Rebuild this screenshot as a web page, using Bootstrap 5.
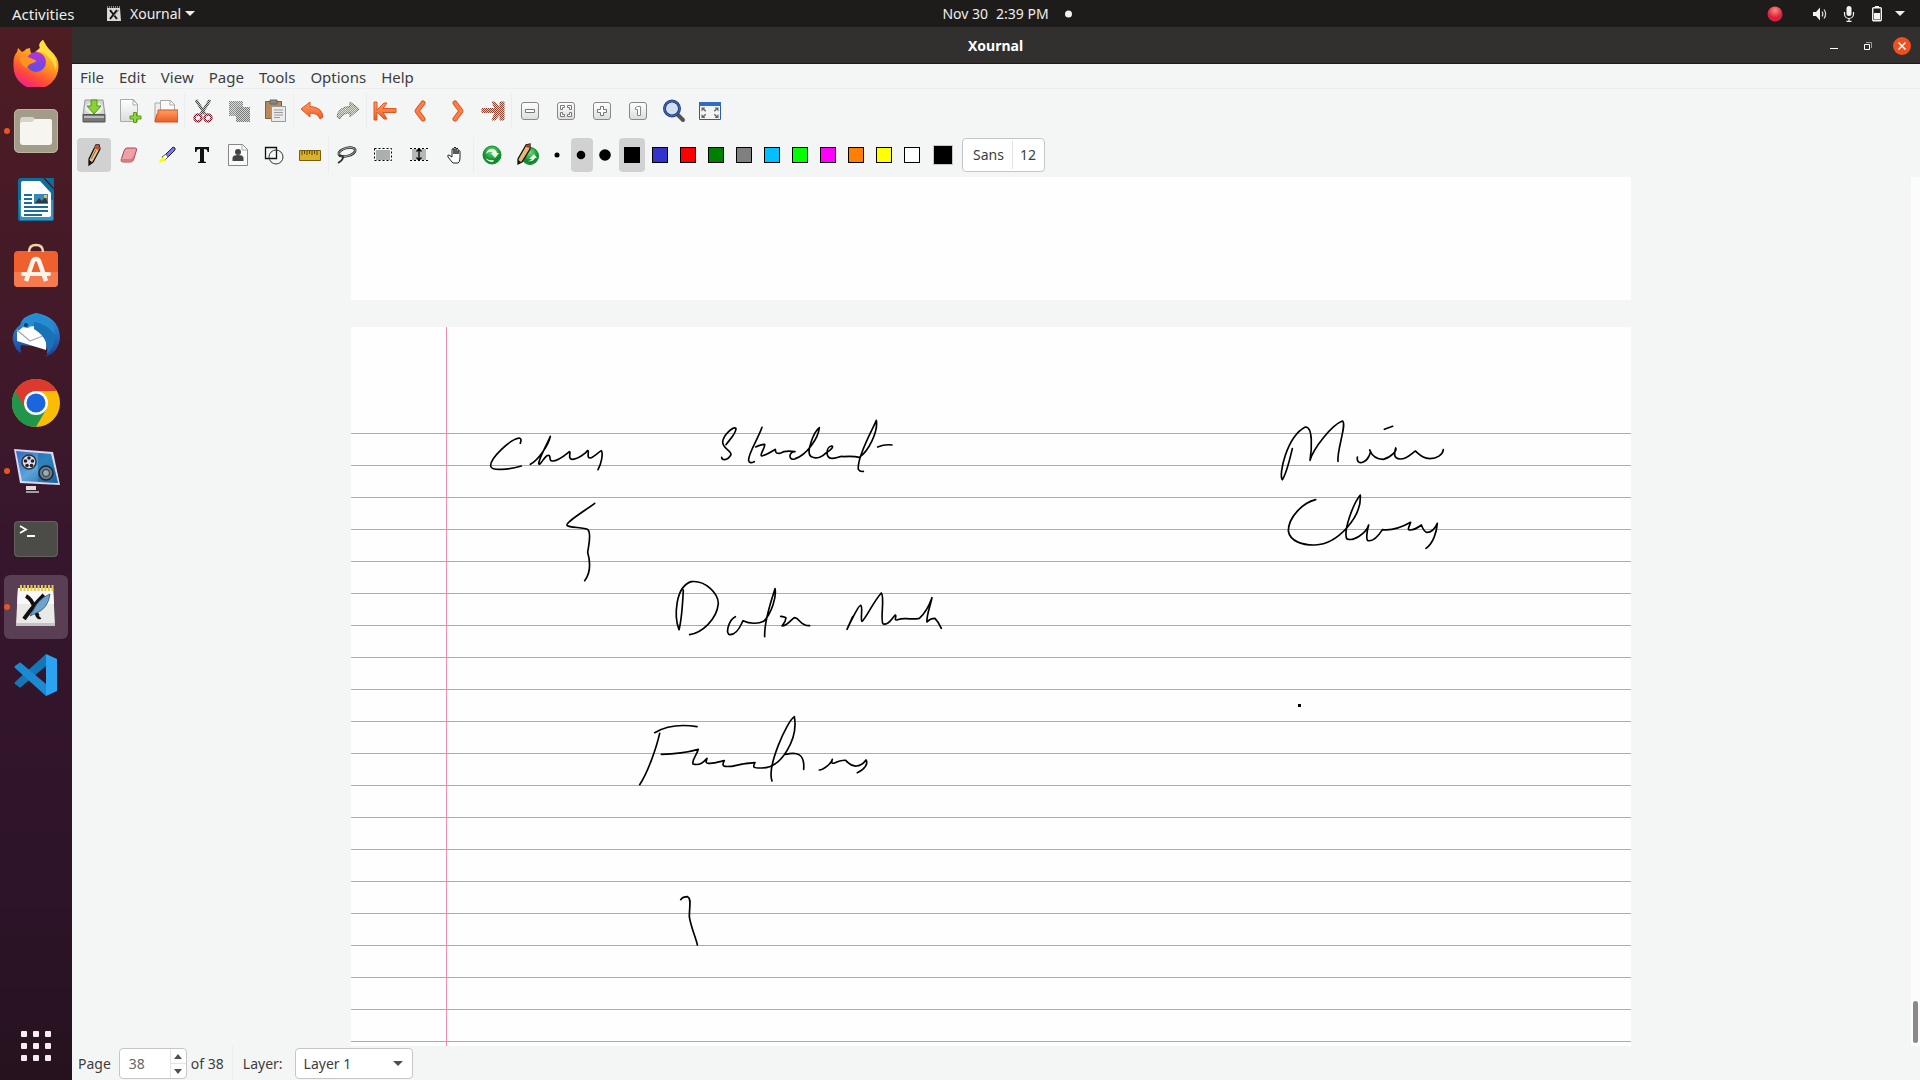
<!DOCTYPE html>
<html lang="en">
<head>
<meta charset="utf-8">
<meta name="viewport" content="width=device-width, initial-scale=1">
<title>Xournal</title>
<link href="https://cdn.jsdelivr.net/npm/bootstrap@5.3.0/dist/css/bootstrap.min.css" rel="stylesheet">
<style>
  body { font: 14px/20px "Noto Sans", "Open Sans", sans-serif; color: #3d3d3d; background: #f4f6f6; }
  button { font: inherit; color: inherit; background: none; border: 0; padding: 0; }
  svg { display: block; flex: none; }
  .top-panel { height: 27px; background: #1d1c1a; color: #eeeeec; }
  .panel-left { flex: 1 1 86px; }
  .panel-right { flex: 1 1 0; padding-right: 15px; }
  .tray-icon { margin-left: 12px; }
  .activities { font-size: 15px; width: 62px; }
  .clock-dot { width: 7px; height: 7px; background: #f2f2f2; }
  .dock { width: 72px; padding: 4px 4px 2px; background: linear-gradient(#4e1c22 0, #431a28 25%, #36162d 50%, #2e1429 80%, #26121f 100%); }
  .dock-item { height: 64px; border-radius: 6px; }
  .dock-item.active { background: #5a3f54; }
  .dock-item.running::before { content: ""; position: absolute; left: 0; top: 29px; width: 6px; height: 6px; border-radius: 50%; background: #e95420; }
  .title-bar { height: 37px; background: #32302f; border-bottom: 1px solid #1b1a19; color: #fff; padding: 1px 9px 0 0; }
  .title-side { flex: 1 1 0; gap: 16px; }
  .win-btn { width: 18px; height: 18px; }
  .menu-bar { height: 25px; border-bottom: 1px solid #eceeee; }
  .menu-bar .nav-link { padding: 0 7px 0 8px; font-size: 15px; line-height: 26px; color: #3d3d3d; }
  .tool-row { height: 44px; padding: 0 4px; }
  .tool { width: 34px; height: 34px; margin: 0 1px; border-radius: 4px; display: flex; align-items: center; justify-content: center; flex: none; }
  .tool[aria-pressed="true"] { background: #d1d1d1; }
  .tool.dot { width: 22px; }
  .tool.swatch { width: 26px; }
  .tool.picker { width: 32px; }
  .ink { width: 16px; height: 16px; border: 1px solid #000; }
  .ink-lg { width: 18px; height: 18px; background: #000; outline: 1px solid #c4c8c8; }
  .rule { width: 1px; height: 36px; background: #eceeee; flex: none; }
  .font-btn { height: 34px; padding: 0 8px 0 10px; border: 1px solid #c6c6c6; border-radius: 4px; background: #fff; margin-left: 2px; }
  .font-btn .size-part { border-left: 1px solid #e4e4e4; padding-left: 7px; margin-left: 8px; line-height: 28px; }
  .desk { min-height: 0; }
  .sheets { gap: 27px; min-width: 0; padding-right: 1px; }
  .sheet { width: 1280px; max-width: 100%; background: #fefefe; }
  .sheet-prev { height: 123px; flex: none; }
  .sheet-ruled { background:
      linear-gradient(90deg, transparent 95px, #f08cae 95px, #f08cae 96px, transparent 96px),
      repeating-linear-gradient(transparent 0 31px, #82b6dc 31px 32px) 0 75px / 100% 100% no-repeat, #fefefe; }
  .scroll-track { width: 9px; padding-bottom: 3px; background: #fcfcfc; }
  .scroll-thumb { width: 5px; height: 42px; border-radius: 3px; background: #8a8888; }
  .status-bar { height: 34px; padding: 1px 6px 0; }
  .spin { width: 68px; height: 31px; border: 1px solid #c6c6c6; border-radius: 4px; background: #fff; }
  .spin input { width: 50px; border: 0; background: none; padding: 0 0 0 9px; color: #666; appearance: textfield; -moz-appearance: textfield; }
  .spin input::-webkit-inner-spin-button { appearance: none; -webkit-appearance: none; margin: 0; }
  .spin-arrows { width: 16px; border-left: 1px solid #e4e4e4; }
  .spin-arrows button + button { border-top: 1px solid #e4e4e4; }
  .layer-label { margin: 0 12px 0 10px; }
  .layer-select { width: 118px; height: 31px; padding: 0 30px 0 8px; font-size: 14px; line-height: 20px; color: #3d3d3d; border: 1px solid #c6c6c6; border-radius: 4px;
      background: #fff url("data:image/svg+xml,%3Csvg xmlns='http://www.w3.org/2000/svg' viewBox='0 0 10 5'%3E%3Cpath d='M0 0h10L5 5z' fill='%23505050'/%3E%3C/svg%3E") right 9px center / 10px 5px no-repeat; }
</style>
</head>
<body class="vh-100 d-flex flex-column overflow-hidden">

<svg class="position-absolute" width="0" height="0" aria-hidden="true">
  <defs>
    <pattern id="checks" width="2" height="2" patternUnits="userSpaceOnUse"><path fill="#fff" d="M0 0h1v1H0zM1 1h1v1H1z"/><path fill="#444" d="M1 0h1v1H1zM0 1h1v1H0z"/></pattern>
    <mask id="dither" maskUnits="userSpaceOnUse" x="0" y="0" width="24" height="24"><rect width="24" height="24" fill="url(#checks)"/></mask>
    <linearGradient id="orange" x2="0" y2="1"><stop stop-color="#fca066"/><stop offset="1" stop-color="#ee5a24"/></linearGradient>
    <linearGradient id="tile" x2="0" y2="1"><stop stop-color="#fff"/><stop offset="1" stop-color="#dcdcdc"/></linearGradient>
    <linearGradient id="foxbody" x1=".8" y1="0" x2=".3" y2="1"><stop stop-color="#ffe84a"/><stop offset=".45" stop-color="#ff9a1e"/><stop offset=".75" stop-color="#ff4a3a"/><stop offset="1" stop-color="#f01e8c"/></linearGradient>
    <linearGradient id="foxeye" x2="0" y2="1"><stop stop-color="#b833d8"/><stop offset="1" stop-color="#5b50e0"/></linearGradient>
    <linearGradient id="bird" x2="0" y2="1"><stop stop-color="#2a9de0"/><stop offset="1" stop-color="#1f3f9c"/></linearGradient>
    <linearGradient id="monitor" x2="1" y2="1"><stop stop-color="#3468c4"/><stop offset=".5" stop-color="#5ba4dc"/><stop offset="1" stop-color="#245a9a"/></linearGradient>
    <radialGradient id="rec" cy=".25"><stop stop-color="#ff8a7a"/><stop offset="1" stop-color="#dc1f3c"/></radialGradient>
    <radialGradient id="green" cy=".3"><stop stop-color="#6fdc7c"/><stop offset="1" stop-color="#0f8a2c"/></radialGradient>
  </defs>
</svg>

<header class="top-panel d-flex align-items-center flex-shrink-0">
  <div class="panel-left d-flex align-items-center ps-2">
    <button class="activities ms-1 text-start">Activities</button>
    <button class="d-flex align-items-center ms-4 ps-2 gap-1">
      <svg class="me-1" width="16" height="16" viewBox="0 0 16 16"><path d="M1 2h13l1 13H1z" fill="#d8d8d6"/><path d="M1 1h13" stroke="#eee" stroke-dasharray="1 1"/><path d="M4 4l7 9M11 4l-7 9" stroke="#111" stroke-width="2"/><path d="M13 4l-6 7" stroke="#889" stroke-width="1"/></svg>
      <span>Xournal</span>
      <svg width="10" height="6" viewBox="0 0 10 6"><path d="M0 0h10L5 5z" fill="#eee"/></svg>
    </button>
  </div>
  <button class="d-flex align-items-center position-relative" aria-label="Clock">
    <span>Nov 30</span><span class="ms-2">2:39 PM</span>
    <span class="clock-dot rounded-circle position-absolute start-100 top-50 translate-middle-y ms-3"></span>
  </button>
  <div class="panel-right d-flex align-items-center justify-content-end">
    <svg width="16" height="16" viewBox="0 0 16 16"><circle cx="8" cy="8" r="7.500" fill="url(#rec)"/></svg>
    <svg class="ms-4 me-2" width="24" height="16" viewBox="0 0 24 16"><path d="M6 6h3l4-4.500v13L9 10H6z" fill="#f2f2f2"/><path d="M15 5.500q1.700 2.500 0 5M17 3.500q3.200 4.500 0 9" fill="none" stroke="#ddd" stroke-width="1.200"/></svg>
    <svg class="ms-1" width="12" height="16" viewBox="0 0 12 16"><rect x="3.500" y="0" width="5" height="10" rx="2.500" fill="#f2f2f2"/><path d="M1.500 6v2a4.500 4.500 0 0 0 9 0V6M6 12v3M3.500 15.300h5" fill="none" stroke="#f2f2f2" stroke-width="1.200"/></svg>
    <svg class="ms-3" width="12" height="16" viewBox="0 0 12 16"><path d="M4 0h4v2H4z" fill="#f2f2f2"/><rect x="1.700" y="1.700" width="8.600" height="13" rx="1" fill="none" stroke="#f2f2f2" stroke-width="1.400"/><path d="M3 7h6v6.500H3z" fill="#f2f2f2"/></svg>
    <svg class="tray-icon" width="10" height="6" viewBox="0 0 10 6"><path d="M0 0h10L5 5z" fill="#eee"/></svg>
  </div>
</header>

<div class="desk d-flex flex-grow-1">
  <nav class="dock d-flex flex-column gap-1 flex-shrink-0" aria-label="Dock">
    <button class="dock-item d-flex align-items-center justify-content-center" aria-label="Firefox">
      <svg width="48" height="48" viewBox="0 0 48 48"><path d="M28 9Q26 4 31 1q3 7 8 11 8 7 7.500 16A22.500 22.500 0 0 1 1.500 27Q1 17 5 13l1-4 4 4q3-1 4-3l4-1q0 6 5 8z" fill="url(#foxbody)"/><circle cx="24" cy="23" r="10" fill="url(#foxeye)"/><path d="M28 9Q26 4 31 1q4 8 9 13 6 7 4 17-4-12-12-17-4-2-9-1z" fill="#ffdf3d"/><path d="M7 19q4-3 9-1l7 3q3 1-2 3-5 1-6 5-5-1-8-10z" fill="#ff9320"/></svg>
    </button>
    <button class="dock-item running position-relative d-flex align-items-center justify-content-center" aria-label="Files">
      <svg width="48" height="48" viewBox="0 0 48 48"><rect x="2" y="2" width="44" height="44" rx="5" fill="#a39c88"/><rect x="2.500" y="2.500" width="43" height="43" rx="5" fill="none" stroke="#bbb4a2"/><path d="M8 14q0-4 3-4h9q2 0 3 2l1 2h13v8H8z" fill="#d8d3c8"/><path d="M8 17q0-2 2-2h10l3-3h15q2 0 2 2v21q0 3-3 3H11q-3 0-3-3z" fill="#f7f5f0"/></svg>
    </button>
    <button class="dock-item d-flex align-items-center justify-content-center" aria-label="LibreOffice Writer">
      <svg width="48" height="48" viewBox="0 0 48 48"><path d="M9 3h22l11 12v29q0 2-2 2H8q-2 0-2-2V6q0-3 3-3z" fill="#0f6d9c"/><path d="M7 25h34v20H8z" fill="#3b93bb"/><path d="M11 6h17l11 12v22q0 2-2 2H11q-2 0-2-2V8q0-2 2-2z" fill="#fff"/><path d="M33 3h9v10z" fill="#0f6d9c"/><path d="M12 20h8M12 24h8M12 28h8M12 32h24M12 36h24M12 40h18" stroke="#1c6c98" stroke-width="1.800"/><path d="M22 19h14v10H22z" fill="#3a8ab8"/><path d="M23 28l4-5 3 3 3-4 3 6z" fill="#2b3a40"/><path d="M32 20h3v3h-3z" fill="#f4b63c"/></svg>
    </button>
    <button class="dock-item d-flex align-items-center justify-content-center" aria-label="Ubuntu Software">
      <svg width="48" height="48" viewBox="0 0 48 48"><rect x="2" y="8" width="44" height="36" rx="4" fill="#f0602f"/><path d="M2 29h44v11q0 4-4 4H6q-4 0-4-4z" fill="#f47a50"/><path d="M17 9q0-7 7-7t7 7" fill="none" stroke="#f3d0a8" stroke-width="2.500"/><path d="M14 38l7-20q1-2 3-2t3 2l7 20" fill="none" stroke="#fff3ea" stroke-width="4.500"/><path d="M11 31h26" stroke="#fff3ea" stroke-width="4" stroke-linecap="round"/></svg>
    </button>
    <button class="dock-item d-flex align-items-center justify-content-center" aria-label="Thunderbird">
      <svg width="48" height="48" viewBox="0 0 48 48"><path d="M24 2Q10 5 8 14-1 21 1 30q2 9 8 12-1-6 0-8l28 3q0 5-4 9 14-5 15-20Q47 6 24 2z" fill="url(#bird)"/><path d="M5 21l6-5 14-1 10 3-1 21-29-9z" fill="#fff"/><path d="M5 19l13 11 18-7" fill="none" stroke="#aab" stroke-width="1.300"/><path d="M10 13Q15 3 26 3q15 3 17 22Q38 14 23 11l-7 6-6-1z" fill="#248dd2"/><path d="M22 11q12 1 22 14-1 10-9 18 2-16-13-25z" fill="#1971b8"/><circle cx="14" cy="14" r="2" fill="#123a6a"/></svg>
    </button>
    <button class="dock-item d-flex align-items-center justify-content-center" aria-label="Google Chrome">
      <svg width="48" height="48" viewBox="0 0 48 48"><circle cx="24" cy="24" r="24" fill="#fbbc05"/><path d="M3.200 12A24 24 0 0 0 24 48l10.400-18z" fill="#1f9649"/><path d="M24 12h20.800A24 24 0 0 0 3.200 12L13.600 30z" fill="#dc3a2f"/><circle cx="24" cy="24" r="12" fill="#fff"/><circle cx="24" cy="24" r="9.500" fill="#1a66dc"/></svg>
    </button>
    <button class="dock-item running position-relative d-flex align-items-center justify-content-center" aria-label="Screen recorder">
      <svg width="48" height="48" viewBox="0 0 48 48"><path d="M2 2l39 3 7 33-40-2z" fill="#d8d8ee"/><path d="M4 4l35 3 7 29-36-2z" fill="url(#monitor)"/><path d="M26 6l13 1 7 29-20-1z" fill="#0f6ca8" opacity=".6"/><circle cx="17" cy="15" r="7" fill="#dde" stroke="#333" stroke-width="1.500"/><g fill="#222"><circle cx="17" cy="11" r="1.800"/><circle cx="13.500" cy="14" r="1.800"/><circle cx="15" cy="18.500" r="1.800"/><circle cx="19.500" cy="18.500" r="1.800"/><circle cx="20.500" cy="14" r="1.800"/></g><circle cx="34" cy="26" r="7" fill="#667a88" stroke="#223" stroke-width="1.500"/><circle cx="34" cy="26" r="3.500" fill="#9ab" stroke="#333"/><path d="M14 39h10v4H14z" fill="#ddd"/><path d="M14 45h13" stroke="#ccc" stroke-width="1.500"/></svg>
    </button>
    <button class="dock-item d-flex align-items-center justify-content-center" aria-label="Terminal">
      <svg width="48" height="48" viewBox="0 0 48 48"><rect x="2" y="6" width="44" height="36" rx="4" fill="#4b4c48"/><rect x="2.500" y="6.500" width="43" height="35" rx="4" fill="none" stroke="#63645f"/><path d="M8 11l6 3.500L8 18M15 21h8" fill="none" stroke="#fff" stroke-width="1.800"/></svg>
    </button>
    <button class="dock-item active running position-relative d-flex align-items-center justify-content-center" aria-label="Xournal">
      <svg width="48" height="48" viewBox="0 0 48 48"><path d="M6 5h35l2 37H4z" fill="#e9e9e7"/><path d="M6 5h35l1 16H5z" fill="#f8f8f8"/><path d="M4 40h39v3H4z" fill="#c4c4c2"/><path d="M8 5h34" stroke="#e9c93a" stroke-width="6" stroke-dasharray="2 1.500"/><path d="M14 13q6 3 9 13t5 8M32 12Q22 22 12 36" fill="none" stroke="#111" stroke-width="4"/><path d="M38 11Q26 16 21 28l-3 5 6-3q12-4 14-19z" fill="#6fa3cc" stroke="#3a6a94"/></svg>
    </button>
    <button class="dock-item d-flex align-items-center justify-content-center" aria-label="Visual Studio Code">
      <svg width="48" height="48" viewBox="0 0 48 48"><path d="M34 3v12L9 36q-1 1-2 0l-4-3q-1-1 0-2z" fill="#1277b8"/><path d="M34 45V33L9 12q-1-1-2 0l-4 3q-1 1 0 2z" fill="#1b8ad3"/><path d="M34 3l11 5v32l-11 5z" fill="#2aa4f0"/></svg>
    </button>
    <button class="dock-item d-flex align-items-center justify-content-center mt-auto" aria-label="Show Applications">
      <svg width="30" height="30" viewBox="0 0 30 30" fill="#f8ecf4"><rect width="6" height="6" rx="1"/><rect x="12" width="6" height="6" rx="1"/><rect x="24" width="6" height="6" rx="1"/><rect y="12" width="6" height="6" rx="1"/><rect x="12" y="12" width="6" height="6" rx="1"/><rect x="24" y="12" width="6" height="6" rx="1"/><rect y="24" width="6" height="6" rx="1"/><rect x="12" y="24" width="6" height="6" rx="1"/><rect x="24" y="24" width="6" height="6" rx="1"/></svg>
    </button>
  </nav>

  <main class="sheets-pane d-flex flex-column flex-grow-1 overflow-hidden">
    <div class="title-bar d-flex align-items-center flex-shrink-0">
      <div class="title-side ps-2"></div>
      <strong>Xournal</strong>
      <div class="title-side d-flex justify-content-end">
        <button class="win-btn" aria-label="Minimize"><svg width="18" height="18"><path d="M5 11.500h8" stroke="#fff"/></svg></button>
        <button class="win-btn" aria-label="Restore"><svg width="18" height="18"><path d="M5.500 7.500h5v5h-5z" fill="none" stroke="#fff"/><path d="M7 5.500h5.500V11" fill="none" stroke="#999"/></svg></button>
        <button class="win-btn" aria-label="Close"><svg width="18" height="18"><circle cx="9" cy="9" r="9" fill="#f0501f"/><path d="M5.500 5.500l7 7M12.500 5.500l-7 7" stroke="#fff" stroke-width="1.500"/></svg></button>
      </div>
    </div>

    <nav class="menu-bar nav flex-nowrap flex-shrink-0">
      <a class="nav-link" href="#">File</a><a class="nav-link" href="#">Edit</a><a class="nav-link" href="#">View</a><a class="nav-link" href="#">Page</a><a class="nav-link" href="#">Tools</a><a class="nav-link" href="#">Options</a><a class="nav-link" href="#">Help</a>
    </nav>

    <div class="tool-row d-flex align-items-center flex-shrink-0" role="toolbar" aria-label="Main">
      <button class="tool" aria-label="Save"><svg width="24" height="24"><path d="M3 1h18l2 15H1z" fill="#d4d4d4" stroke="#999"/><ellipse cx="12" cy="9" rx="9" ry="6" fill="#eee"/><path d="M1 15.500h22V23H1z" fill="#777" stroke="#555"/><path d="M2 17h20v2H2z" fill="#bbb"/><path d="M9 1h6v6h4l-7 8-7-8h4z" fill="#8ccf3a" stroke="#4e9a06"/></svg></button>
      <button class="tool" aria-label="New"><svg width="24" height="24"><path d="M2.500.5h13l4 5v17h-17z" fill="url(#tile)" stroke="#aaa"/><path d="M15 1l5 5h-5z" fill="#fff" stroke="#aaa"/><path d="M15.500 13.500h3v3.500H23v3h-4.500v3.500h-3V20H12v-3h3.500z" fill="#8fd63f" stroke="#5a9a12"/></svg></button>
      <button class="tool" aria-label="Open"><svg width="24" height="24"><path d="M1 4h7v18H1z" fill="#eee" stroke="#aaa"/><path d="M6.500 1.500h10l4 4V14h-14z" fill="#fafafa" stroke="#aaa"/><path d="M16 1v5h5" fill="none" stroke="#aaa"/><path d="M1 22l2-7h1v-4h20v12H1z" fill="url(#orange)" stroke="#d5501c"/></svg></button>
      <span class="rule"></span>
      <button class="tool" aria-label="Cut"><svg width="24" height="24"><g mask="url(#dither)"><path d="M5 1l9 14M19 1l-9 14" stroke="#444" stroke-width="3"/><g fill="none" stroke="#7c1020" stroke-width="2.500"><circle cx="7" cy="19" r="3.500"/><circle cx="17" cy="19" r="3.500"/></g></g></svg></button>
      <button class="tool" aria-label="Copy"><svg width="24" height="24"><g mask="url(#dither)"><path d="M2 2h14v15H2z" fill="#8a8a8a"/><path d="M9 8h14v15H9z" fill="#777"/></g></svg></button>
      <button class="tool" aria-label="Paste"><svg width="24" height="24"><path d="M2.500 2.500h16v17h-16z" fill="#b98a55" stroke="#85602f"/><path d="M7 1h7v4H7z" fill="#888" stroke="#666"/><path d="M8.500 7.500h14v15h-14z" fill="#ebebeb" stroke="#999"/><path d="M11 11h9M11 13.500h9M11 16h9M11 18.500h6" stroke="#999"/></svg></button>
      <span class="rule"></span>
      <button class="tool" aria-label="Undo"><svg width="24" height="24"><path d="M1 10l9-7v4.500Q22 8 23 18l-3 2q-2-6-10-6v4z" fill="url(#orange)" stroke="#e0561f"/></svg></button>
      <button class="tool" aria-label="Redo"><svg width="24" height="24"><g mask="url(#dither)"><path d="M23 10l-9-7v4.500Q2 8 1 18l3 2q2-6 10-6v4z" fill="#8fa66c" stroke="#4d6626"/></g></svg></button>
      <span class="rule"></span>
      <button class="tool" aria-label="First page"><svg width="24" height="24"><path d="M1 3h3v8l7-7h3l-4 5.500h13v4H10L14 20h-3l-7-7v8H1z" fill="url(#orange)" stroke="#e0561f"/></svg></button>
      <button class="tool" aria-label="Previous page"><svg width="24" height="24"><path d="M14 4l-6 8 6 8" fill="none" stroke="#e0561f" stroke-width="5" stroke-linecap="round" stroke-linejoin="round"/><path d="M14 4l-6 8 6 8" fill="none" stroke="#f8804c" stroke-width="3" stroke-linecap="round"/></svg></button>
      <button class="tool" aria-label="Next page"><svg width="24" height="24"><path d="M10 4l6 8-6 8" fill="none" stroke="#e0561f" stroke-width="5" stroke-linecap="round" stroke-linejoin="round"/><path d="M10 4l6 8-6 8" fill="none" stroke="#f8804c" stroke-width="3" stroke-linecap="round"/></svg></button>
      <button class="tool" aria-label="Last page"><svg width="24" height="24"><g mask="url(#dither)"><path d="M23 3h-4v6l-5-6h-3l3 6.500H1v4h13L11 21h3l5-6v6h4z" fill="#8c4430" stroke="#8c4430"/></g></svg></button>
      <span class="rule"></span>
      <button class="tool" aria-label="Zoom out"><svg width="24" height="24"><rect x="3.500" y="3.500" width="17" height="17" rx="2.500" fill="url(#tile)" stroke="#888"/><path d="M7.500 10.500h9v3h-9z" fill="#fff" stroke="#777"/></svg></button>
      <button class="tool" aria-label="Page width"><svg width="24" height="24"><rect x="3.500" y="3.500" width="17" height="17" rx="2.500" fill="url(#tile)" stroke="#888"/><path d="M10.500 6.500h-4v4h2v-2h2zM13.500 6.500h4v4h-2v-2h-2zM10.500 17.500h-4v-4h2v2h2zM13.500 17.500h4v-4h-2v2h-2z" fill="#fff" stroke="#777"/></svg></button>
      <button class="tool" aria-label="Zoom in"><svg width="24" height="24"><rect x="3.500" y="3.500" width="17" height="17" rx="2.500" fill="url(#tile)" stroke="#888"/><path d="M10.500 7.500h3v3h3v3h-3v3h-3v-3h-3v-3h3z" fill="#fff" stroke="#777"/></svg></button>
      <button class="tool" aria-label="Normal size"><svg width="24" height="24"><rect x="3.500" y="3.500" width="17" height="17" rx="2.500" fill="url(#tile)" stroke="#888"/><path d="M11.500 7.500h3v9h-3v-6h-2v-2z" fill="#fff" stroke="#888"/></svg></button>
      <button class="tool" aria-label="Set zoom"><svg width="24" height="24"><path d="M15 15l6 6" stroke="#555" stroke-width="4" stroke-linecap="round"/><circle cx="10" cy="9.500" r="7.500" fill="#d4e0ee" stroke="#203f82" stroke-width="3"/><circle cx="10" cy="9.500" r="7.500" fill="none" stroke="#4a74b8"/></svg></button>
      <button class="tool" aria-label="Fullscreen"><svg width="24" height="24"><path d="M1.500 3.500h21v17h-21z" fill="#f4f4f6" stroke="#2a5aa8"/><path d="M1 3h22v4H1z" fill="#2f6cc4"/><path d="M3.500 8.500h4l-1.300 1.300 2 2-1 1-2-2L3.500 12.500zM20.500 8.500h-4l1.300 1.300-2 2 1 1 2-2 1.700 1.700zM3.500 19h4l-1.300-1.300 2-2-1-1-2 2L3.500 15zM20.500 19h-4l1.300-1.300-2-2 1-1 2 2 1.700-1.700z" fill="#666"/></svg></button>
    </div>

    <div class="tool-row d-flex align-items-center flex-shrink-0" role="toolbar" aria-label="Drawing">
      <button class="tool" aria-pressed="true" aria-label="Pen"><svg width="24" height="24"><path d="M14 2l3 0 1 4-7 13-4 3 0-6z" fill="#e8c48c" stroke="#111" stroke-width="1.300"/><path d="M14 2l3 0 1 4-2 1-4-2z" fill="#c4512e"/><path d="M7 17l3 2-3 3z" fill="#111"/><path d="M14 7l-5 9" stroke="#8a6a3a"/></svg></button>
      <button class="tool" aria-label="Eraser"><svg width="24" height="24"><path d="M9 5h8q2 0 1.500 2l-3 10q-1 2-3 2H5q-2 0-2-2l3-9q1-3 3-3z" fill="#eda0a6" stroke="#a04a50"/><path d="M3 15q1 1 2 1h7q2 0 3-2l3-7-3 10q-1 2-3 2H5q-2 0-2-2z" fill="#d97a82"/></svg></button>
      <button class="tool" aria-label="Highlighter"><svg width="24" height="24"><path d="M12 11l7-7 2 1v2l-8 8z" fill="#7a7af0" stroke="#223"/><path d="M8 14l4-3 2 3-4 4z" fill="#fff" stroke="#555"/><path d="M5 20q1-4 4-6l3 3q-3 2-7 3z" fill="#ff0"/></svg></button>
      <button class="tool" aria-label="Text"><svg width="24" height="24"><path d="M5 4h14v5h-1.500q0-3-3-3H14v12q0 1 2 1v1H8v-1q2 0 2-1V6h-.5q-3 0-3 3H5z" fill="#111"/></svg></button>
      <button class="tool" aria-label="Image"><svg width="24" height="24"><path d="M2.500 1.500h14l5 5v16h-19z" fill="#fafafa" stroke="#888"/><path d="M16 2v5h5" fill="none" stroke="#aaa"/><circle cx="12" cy="9" r="3" fill="#444"/><path d="M6.500 18v-3q0-3 5.500-3t5.500 3v3z" fill="#444"/></svg></button>
      <button class="tool" aria-label="Shape recognizer"><svg width="24" height="24"><path d="M3.500 4.500h11v11h-11z" fill="none" stroke="#111" stroke-width="1.300"/><circle cx="14" cy="14" r="7" fill="none" stroke="#333"/></svg></button>
      <button class="tool" aria-label="Ruler"><svg width="24" height="24"><path d="M1.500 7.500h21v10h-21z" fill="#d9b12c" stroke="#7a5f0a"/><path d="M4 8v4M6.500 8v3M9 8v4M11.500 8v3M14 8v4M16.500 8v3M19 8v4" stroke="#5c4700"/></svg></button>
      <span class="rule"></span>
      <button class="tool" aria-label="Select region"><svg width="24" height="24"><ellipse cx="12" cy="9" rx="8.500" ry="4" transform="rotate(-15 12 9)" fill="none" stroke="#222" stroke-width="2.500"/><ellipse cx="12" cy="9" rx="8.500" ry="4" transform="rotate(-15 12 9)" fill="none" stroke="#ccc" stroke-width=".8"/><path d="M4 13q5-1 4 2t-5 5" fill="none" stroke="#333" stroke-width="1.800"/></svg></button>
      <button class="tool" aria-label="Select rectangle"><svg width="24" height="24"><path d="M5 7h14v10H5z" fill="#aab0ae"/><path d="M3.500 5.500h17v12h-17z" fill="none" stroke="#000" stroke-dasharray="2 2"/></svg></button>
      <button class="tool" aria-label="Vertical space"><svg width="24" height="24"><path d="M5 6h14v11H5z" fill="#b4b8b6"/><path d="M3 5.500h18M3 17.500h18" stroke="#000" stroke-dasharray="2 2"/><path d="M12 6v11M9.500 8.500L12 6l2.500 2.500M9.500 14.500L12 17l2.500-2.500" fill="none" stroke="#000" stroke-width="1.300"/></svg></button>
      <button class="tool" aria-label="Hand"><svg width="24" height="24"><path d="M9 19l-4-5q-1-2 1-2l3 2V7q0-2 2-1l0 5V5q1-2 2 0v6-5q1-2 2 0v5-3q2-1 2 0v7q0 4-2 5h-5z" fill="#fff" stroke="#222"/></svg></button>
      <span class="rule"></span>
      <button class="tool" aria-label="Default tool"><svg width="24" height="24"><circle cx="12" cy="12" r="9" fill="url(#green)" stroke="#168a34"/><path d="M6 11q1-5 6-5 4 0 5 4h2l-4 5-4-5h2q-3-3-7 1zM5 14q3 4 9 3l-1 2q-6 0-8-5z" fill="#eafbe8"/></svg></button>
      <button class="tool" aria-label="Default pen"><svg width="24" height="24"><circle cx="14" cy="13" r="8.500" fill="url(#green)" stroke="#168a34"/><path d="M13 16l5-5 3 4h-2q-2 4-7 3 3 0 4-2z" fill="#eafbe8"/><path d="M10 2l4-1 0 5-8 13-4 2 0-5z" fill="#e8b878" stroke="#111" stroke-width="1.300"/><path d="M10 2l4-1 0 4-4-1z" fill="#b03a1e"/><path d="M2 17l3 2-3 2z" fill="#111"/></svg></button>
      <button class="tool dot" aria-label="Fine"><svg width="14" height="14"><circle cx="6" cy="7" r="2.500"/></svg></button>
      <button class="tool dot" aria-pressed="true" aria-label="Medium"><svg width="14" height="14"><circle cx="6" cy="7" r="4.300"/></svg></button>
      <button class="tool dot" aria-label="Thick"><svg width="14" height="14"><circle cx="6" cy="7" r="5.800"/></svg></button>
      <button class="tool swatch" aria-pressed="true" aria-label="Black"><span class="ink" style="background:#000"></span></button>
      <button class="tool swatch" aria-label="Blue"><span class="ink" style="background:#3333cc"></span></button>
      <button class="tool swatch" aria-label="Red"><span class="ink" style="background:#ff0000"></span></button>
      <button class="tool swatch" aria-label="Green"><span class="ink" style="background:#008000"></span></button>
      <button class="tool swatch" aria-label="Gray"><span class="ink" style="background:#808080"></span></button>
      <button class="tool swatch" aria-label="Light blue"><span class="ink" style="background:#00c0ff"></span></button>
      <button class="tool swatch" aria-label="Light green"><span class="ink" style="background:#00ff00"></span></button>
      <button class="tool swatch" aria-label="Magenta"><span class="ink" style="background:#ff00ff"></span></button>
      <button class="tool swatch" aria-label="Orange"><span class="ink" style="background:#ff8000"></span></button>
      <button class="tool swatch" aria-label="Yellow"><span class="ink" style="background:#ffff00"></span></button>
      <button class="tool swatch" aria-label="White"><span class="ink" style="background:#ffffff"></span></button>
      <button class="tool picker" aria-label="Choose color"><span class="ink-lg"></span></button>
      <button class="font-btn d-flex align-items-center" aria-label="Font"><span>Sans</span><span class="size-part">12</span></button>
    </div>

    <div class="desk d-flex flex-grow-1">
      <div class="sheets d-flex flex-column align-items-center flex-grow-1">
        <div class="sheet sheet-prev"></div>
        <div class="sheet sheet-ruled flex-grow-1 overflow-hidden">
          <svg width="1280" height="718" fill="none" stroke="#000" stroke-width="5" stroke-linecap="round" stroke-linejoin="round" role="img" aria-label="Handwritten notes">
            <g transform="translate(109 73) scale(.33333)">
              <path d="M181 130Q186 115 178 114C150 118 90 175 92 198C94 215 150 208 184 198"/>
              <path d="M211 193C235 180 266 135 271 109C268 120 238 170 236 191C240 200 255 165 264 166C275 165 265 182 276 183C295 184 315 165 328 155C334 155 322 177 336 178C352 178 378 160 382 152C390 150 378 174 390 174C402 172 416 155 424 152C430 162 424 190 414 209"/>
              <path d="M798 134C810 118 830 98 828 85C820 78 790 105 788 126C788 146 814 152 813 164Q806 178 793 179Q785 179 785 172"/>
              <path d="M906 82C895 115 862 165 866 182Q868 192 883 185M887 141Q905 132 914 133C917 140 898 165 905 168C918 166 935 155 946 148C946 160 950 160 960 160Q975 150 1005 155M1004 155C985 155 985 185 1006 176C1040 165 1075 115 1078 83C1062 95 1035 160 1054 170C1070 180 1090 168 1099 158C1115 150 1122 138 1115 138C1098 140 1095 175 1115 175C1130 176 1142 166 1150 170Q1180 168 1198 172C1225 155 1255 95 1249 61C1240 85 1190 170 1195 208Q1200 216 1210 214M1253 141Q1275 132 1296 135"/>
              <path d="M404 310C385 325 315 368 321 376C328 384 372 381 384 389C395 402 386 435 383 457C388 475 395 515 374 542"/>
              <path d="M670 570C668 610 665 660 657 689C642 650 645 560 694 545C735 540 775 580 775 611C770 660 725 698 689 704"/>
              <path d="M826 650C805 660 795 705 810 704C835 704 845 668 849 662C870 672 895 672 911 664C935 640 950 590 945 566C935 600 912 660 914 710M962 649Q975 650 978 654C976 670 966 676 966 678C985 676 995 655 1004 653C1020 655 1020 678 1049 677"/>
              <path d="M1161 688C1175 660 1195 615 1202 616C1210 620 1200 660 1206 664C1218 655 1240 605 1264 579C1275 590 1260 660 1269 671C1285 680 1298 650 1306 645C1312 650 1300 660 1310 660Q1325 655 1340 656Q1365 658 1378 655C1395 640 1408 615 1416 593C1412 615 1398 650 1401 666Q1410 655 1425 655Q1435 665 1444 685M1178 650L1162 686"/>
            </g>
            <g transform="translate(909 73) scale(.33333)">
              <path d="M97 146C90 175 80 220 67 239C55 225 80 110 136 81C160 80 155 150 150 181C160 145 215 75 247 63C262 70 230 150 234 184"/>
              <path d="M292 171C290 188 300 190 310 186C325 180 335 155 329 150C335 165 345 178 370 178C395 172 412 150 407 144C402 160 400 175 420 177C440 178 455 160 466 153C480 165 490 176 510 176C530 176 548 165 550 149M373 88L398 79"/>
              <path d="M167 299C130 308 85 350 85 393C90 425 130 436 165 435C235 432 305 350 301 285C280 310 250 390 260 416C280 426 318 400 326 375C320 395 318 420 324 422C345 425 360 400 367 389C390 392 420 385 452 367C448 380 440 390 450 390Q465 390 484 375Q492 395 500 397C515 398 525 385 532 370C530 395 520 430 498 445"/>
              <path d="M114 912h9v9h-9z" fill="#000" stroke="none"/>
            </g>
            <g transform="translate(249 353) scale(.33333)">
              <path d="M164 158Q215 128 291 140M179 160C170 200 145 275 119 314M184 223Q245 222 295 208C288 230 275 240 279 252C300 258 312 245 321 235C318 245 315 252 330 250C345 250 360 245 373 242C362 262 375 260 395 259Q430 250 465 248C455 265 465 264 485 264C545 265 595 175 583 110C560 125 500 260 516 303M557 223C590 215 615 220 611 268"/>
              <path d="M658 270C670 270 695 250 697 238C692 255 700 250 710 246Q725 240 737 241C750 255 758 260 770 258Q785 258 798 240C805 250 795 268 772 278"/>
              <path d="M242 659Q248 650 263 650C275 655 268 680 268 710C272 740 290 780 292 795"/>
            </g>
          </svg>
        </div>
      </div>
      <div class="scroll-track d-flex flex-column align-items-center justify-content-end flex-shrink-0"><div class="scroll-thumb"></div></div>
    </div>

    <div class="status-bar d-flex align-items-center flex-shrink-0">
      <label for="pageNo">Page</label>
      <div class="spin d-flex ms-2 me-1">
        <input id="pageNo" type="number" value="38">
        <div class="spin-arrows d-flex flex-column">
          <button class="flex-fill d-flex align-items-center justify-content-center" aria-label="Next page number"><svg width="8" height="5"><path d="M0 5h8L4 0z" fill="#505050"/></svg></button>
          <button class="flex-fill d-flex align-items-center justify-content-center" aria-label="Previous page number"><svg width="8" height="5"><path d="M0 0h8L4 5z" fill="#505050"/></svg></button>
        </div>
      </div>
      <span>of 38</span>
      <span class="rule ms-2"></span>
      <label class="layer-label" for="layerPick">Layer:</label>
      <select class="form-select layer-select" id="layerPick"><option>Layer 1</option></select>
    </div>
  </main>
</div>
<script src="https://cdn.jsdelivr.net/npm/bootstrap@5.3.0/dist/js/bootstrap.bundle.min.js"></script>
</body>
</html>
